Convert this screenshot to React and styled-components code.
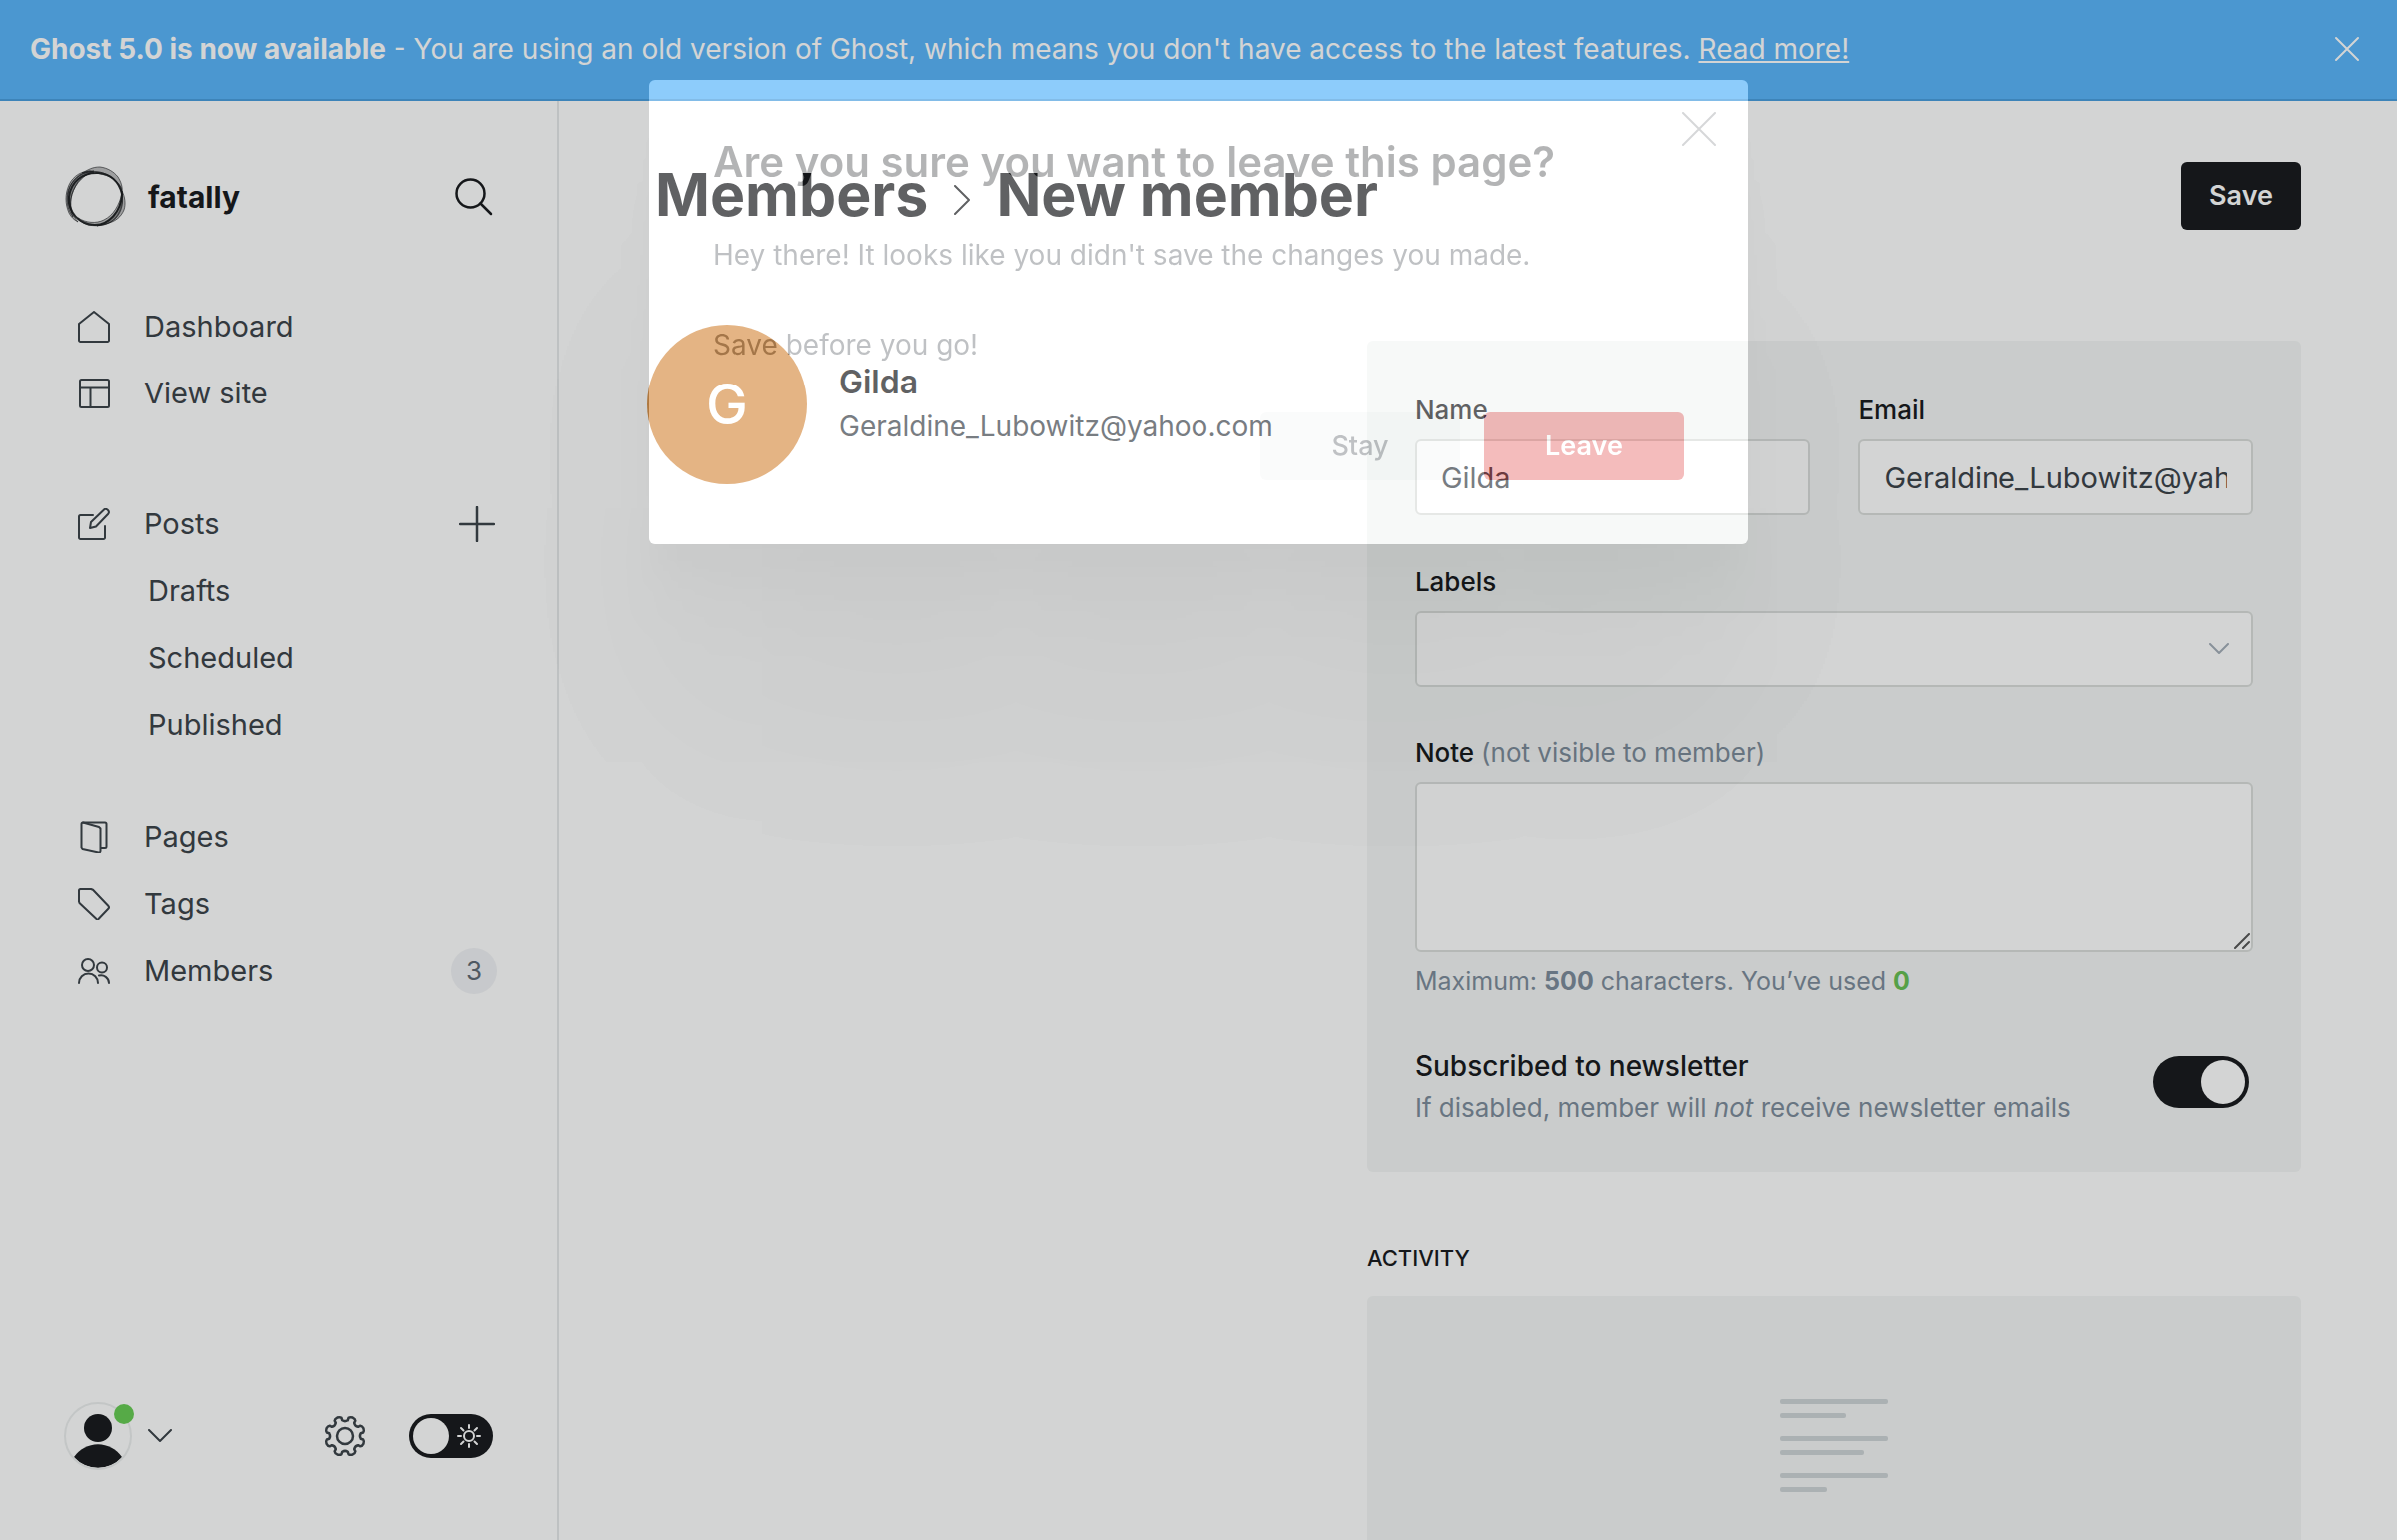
import React, { useState } from "react";
import styled, { createGlobalStyle, css } from "styled-components";

const Global = createGlobalStyle`
  *, *::before, *::after { box-sizing: border-box; }
  html, body { margin: 0; }
  body {
    font-family: Inter, "Liberation Sans", sans-serif;
    font-size: 28px;
    line-height: 44px;
    color: #15171a;
    background: #fff;
    -webkit-font-smoothing: antialiased;
  }
  button, input, textarea, select { font: inherit; color: inherit; }
  h1, h2, h3, p, ul { margin: 0; padding: 0; }
  a { color: inherit; text-decoration: none; }
`;

const Shell = styled.div`
  height: 100vh;
  display: flex;
  flex-direction: column;
  overflow: hidden;
`;

const Banner = styled.div`
  flex: none;
  display: flex;
  align-items: center;
  justify-content: space-between;
  height: 101px;
  padding: 0 36px 2px 30px;
  background: #58b4fa;
  border-bottom: 2px solid #479dde;
  color: #fff;

  a { text-decoration: underline; }
`;

const IconButton = styled.button`
  display: inline-flex;
  align-items: center;
  justify-content: center;
  padding: 0;
  border: 0;
  background: none;
  color: ${(p) => p.$color || "inherit"};
`;

const Body = styled.div`
  flex: 1;
  min-height: 0;
  display: grid;
  grid-template-columns: 560px minmax(0, 1fr);
`;

const Sidebar = styled.aside`
  display: flex;
  flex-direction: column;
  border-right: 2px solid #e6e8e9;
  padding: 62px 60px 70px 64px;
`;

const SiteHeader = styled.header`
  display: flex;
  align-items: center;
  height: 68px;
  margin-bottom: 62px;
  padding-right: 4px;
`;

const SiteName = styled.span`
  flex: 1;
  margin-left: 20px;
  font-size: 30px;
  font-weight: 700;
`;

const NavGroup = styled.ul`
  list-style: none;
  padding: 0 0 0 14px;
  margin-bottom: ${(p) => p.$gap}px;
`;

const NavItem = styled.li`
  display: flex;
  align-items: center;
  justify-content: space-between;
  height: 67px;
  padding-right: ${(p) => (p.$badge ? 0 : 2)}px;
  color: #394047;
  font-size: 29px;
`;

const NavLink = styled.a`
  display: flex;
  align-items: center;
  gap: 34px;
  padding-left: ${(p) => (p.$sub ? 70 : 0)}px;
`;

const Badge = styled.span`
  display: flex;
  align-items: center;
  justify-content: center;
  width: 46px;
  height: 46px;
  border-radius: 50%;
  background: #f1f2f5;
  font-size: 26px;
  color: #5d6873;
`;

const SidebarFooter = styled.footer`
  display: flex;
  align-items: center;
  margin-top: auto;
  padding-right: 4px;
`;

const UserButton = styled(IconButton)`
  gap: 16px;
  margin-right: auto;
  color: #394047;
`;

const AvatarFrame = styled.span`
  position: relative;
  width: 68px;
  height: 68px;
  border: 2px solid #eceeee;
  border-radius: 50%;

  svg { display: block; border-radius: 50%; }
`;

const StatusDot = styled.span`
  position: absolute;
  top: 0;
  right: -4px;
  width: 20px;
  height: 20px;
  border-radius: 50%;
  background: #66cc52;
`;

const SwitchTrack = styled.label`
  position: relative;
  flex: none;
  display: flex;
  align-items: center;
  width: ${(p) => p.$width}px;
  height: ${(p) => p.$height}px;
  padding: 0 4px;
  border-radius: 40px;
  background: #15171a;
  color: #fff;
  flex-direction: ${(p) => (p.$end ? "row-reverse" : "row")};

  input {
    position: absolute;
    inset: 0;
    width: 100%;
    height: 100%;
    margin: 0;
    opacity: 0;
  }
`;

const SwitchKnob = styled.span`
  width: ${(p) => p.$size}px;
  height: ${(p) => p.$size}px;
  border-radius: 50%;
  background: #fff;
`;

const NightSwitch = styled.span`
  display: flex;
  margin-left: 44px;

  svg { margin-left: 8px; }
`;

const Main = styled.main`
  overflow: hidden auto;
  scrollbar-width: none;
  padding: 61px 96px 0 88px;
`;

const PageHeader = styled.header`
  display: flex;
  align-items: center;
  justify-content: space-between;
  height: 68px;
  padding-left: 8px;
  margin-bottom: 111px;
`;

const PageTitle = styled.h2`
  display: flex;
  align-items: center;
  gap: 26px;
  font-size: 59px;
  line-height: 68px;
  font-weight: 700;
  padding-bottom: 2px;

  svg { margin-top: 10px; }
`;

const buttonBase = css`
  height: 68px;
  border: 0;
  border-radius: 6px;
  font-size: 27px;
  font-weight: 600;
`;

const SaveButton = styled.button`
  ${buttonBase}
  padding: 0 28px;
  background: #15171a;
  color: #fff;
`;

const Columns = styled.div`
  display: grid;
  grid-template-columns: minmax(0, 5fr) minmax(0, 7fr);
  column-gap: 53px;
  align-items: start;
`;

const Profile = styled.section`
  display: flex;
  align-items: center;
  gap: 32px;
  margin-top: -16px;
`;

const Initial = styled.span`
  flex: none;
  display: flex;
  align-items: center;
  justify-content: center;
  width: 160px;
  height: 160px;
  border-radius: 50%;
  background: #d7914a;
  color: #fff;
  font-size: 56px;
  font-weight: 500;
`;

const ProfileName = styled.h3`
  font-size: 32px;
  line-height: 44px;
  font-weight: 600;
`;

const ProfileEmail = styled.p`
  color: #394047;
`;

const Card = styled.section`
  background: #f4f6f5;
  border-radius: 6px;
  padding: 48px 48px 45px;
`;

const FieldRow = styled.div`
  display: grid;
  grid-template-columns: 1fr 1fr;
  gap: 48px;
`;

const Field = styled.div`
  display: flex;
  flex-direction: column;
  margin-bottom: ${(p) => p.$gap}px;
`;

const Label = styled.label`
  font-size: 26px;
  line-height: 44px;
  font-weight: 500;
  margin-bottom: 7px;

  span { font-weight: 400; color: #7c8b9a; }
`;

const control = css`
  width: 100%;
  border: 2px solid #dadddb;
  border-radius: 6px;
  background: #fff;
  color: #394047;
  font-size: 29px;
  outline: none;
`;

const TextInput = styled.input`
  ${control}
  height: 76px;
  padding: 0 24px;
`;

const SelectWrap = styled.div`
  display: grid;
  align-items: center;

  > * { grid-area: 1 / 1; }
  > svg { justify-self: end; margin-right: 24px; pointer-events: none; }
`;

const Select = styled.select`
  ${control}
  appearance: none;
  height: 76px;
  padding: 0 24px;
`;

const NoteArea = styled.textarea`
  ${control}
  display: block;
  height: 170px;
  padding: 16px 24px;
  resize: none;
`;

const NoteWrap = styled.div`
  display: grid;
  margin-bottom: 9px;

  > * { grid-area: 1 / 1; }
  > svg { place-self: end; margin: 3px; pointer-events: none; }
`;

const Hint = styled.p`
  font-size: ${(p) => (p.$small ? 25 : 26)}px;
  line-height: 40px;
  color: #7c8b9a;

  b { font-weight: 700; }
`;

const Used = styled.b`
  color: #66bf52;
`;

const ToggleRow = styled.div`
  display: flex;
  justify-content: space-between;
  padding-right: 4px;
`;

const ToggleCell = styled.div`
  display: flex;
  align-items: center;
  height: 76px;
`;

const ToggleTitle = styled.h3`
  font-size: 28px;
  line-height: 44px;
  font-weight: 500;
`;

const SectionTitle = styled.h3`
  font-size: 22px;
  line-height: 40px;
  font-weight: 500;
  margin: 66px 0 18px;
`;

const ActivityCard = styled(Card)`
  display: flex;
  flex-direction: column;
  align-items: center;
  padding: 103px 48px 140px;
`;

const Overlay = styled.div`
  position: fixed;
  inset: 0;
  display: flex;
  justify-content: center;
  align-items: flex-start;
  padding-top: 80px;
  overflow: hidden;
`;

const Scrim = styled.div`
  width: min(1100px, 90vw);
  border-radius: 6px;
  box-shadow: 0 0 0 200vmax rgba(19, 28, 24, 0.19);
`;

const Modal = styled.div`
  opacity: 0.32;
  border-radius: 6px;
  background: #fff;
  padding: 32px 64px 64px;
  box-shadow:
    0 6px 4px rgba(0, 0, 0, 0.01),
    0 25px 20px rgba(0, 0, 0, 0.02),
    0 45px 36px rgba(0, 0, 0, 0.03),
    0 84px 67px rgba(0, 0, 0, 0.04),
    0 200px 220px rgba(0, 0, 0, 0.1);
`;

const ModalHead = styled.div`
  display: flex;
  justify-content: space-between;
  align-items: flex-start;
  margin-right: -32px;
  margin-bottom: 45px;
`;

const ModalTitle = styled.h1`
  padding-top: 24px;
  font-size: 42px;
  line-height: 52px;
  font-weight: 600;
`;

const ModalText = styled.p`
  color: #394047;
  margin-bottom: 46px;
`;

const ModalActions = styled.div`
  display: flex;
  justify-content: flex-end;
  gap: 24px;
`;

const ModalButton = styled.button`
  ${buttonBase}
  width: 200px;
  background: ${(p) => (p.$danger ? "#de2f2f" : "#f0f2f3")};
  color: ${(p) => (p.$danger ? "#fff" : "#394047")};
  font-weight: ${(p) => (p.$danger ? 600 : 500)};
`;

const Icon = ({ size = 32, w = 2, box = "0 0 32 32", width, children }) => (
  <svg
    width={width || size}
    height={size}
    viewBox={box}
    fill="none"
    stroke="currentColor"
    strokeWidth={w}
    strokeLinecap="round"
    strokeLinejoin="round"
    aria-hidden="true"
  >
    {children}
  </svg>
);

const icons = {
  home: <path d="M1 13v16.5a1.5 1.5 0 0 0 1.500 1.500h27a1.500 1.500 0 0 0 1.500-1.500V13L16 1z" />,
  layout: (
    <>
      <rect x="2" y="2" width="29" height="28" rx="1.500" />
      <path d="M2 10.500h29M12.500 10.500V30" />
    </>
  ),
  edit: (
    <>
      <path d="M27 18v11.500a1.500 1.500 0 0 1-1.500 1.500h-23A1.500 1.500 0 0 1 1 29.500v-21A1.500 1.500 0 0 1 2.500 7H15" />
      <path d="M12 20l1-6L25.500 2a3 3 0 0 1 4.500 4L18 18.500z" />
    </>
  ),
  pages: (
    <>
      <path d="M5 1.500h22a1.500 1.500 0 0 1 1.500 1.500v22.500a1.500 1.500 0 0 1-1.500 1.500h-4" />
      <path d="M3.500 3v23.500l1 1.500 16 3.500a1.500 1.500 0 0 0 2-1.500V7.500L21 6 5 1.500A1.500 1.500 0 0 0 3.500 3z" />
    </>
  ),
  tag: <path d="M1 2.500A1.500 1.500 0 0 1 2.500 1H13l2 .8L30.500 18a2 2 0 0 1 0 2.500L20.500 31a1.500 1.500 0 0 1-2 0L1.500 15 1 13.500z" />,
  members: (
    <>
      <circle cx="10" cy="10" r="6" />
      <path d="M1 28a9.500 9.500 0 0 1 19 0" />
      <circle cx="24" cy="12.500" r="5" />
      <path d="M21 20.500A8 8 0 0 1 31 28" />
    </>
  ),
};

const gearPath = (() => {
  const pts = [];
  for (let i = 0; i < 8; i++) {
    const a = (i * Math.PI) / 4 + Math.PI / 8;
    const at = (r, d) => `${(20 + r * Math.cos(a + d)).toFixed(2)} ${(20 + r * Math.sin(a + d)).toFixed(2)}`;
    pts.push(`${i ? "L" : "M"}${at(16, -0.22)}L${at(18.5, -0.2)}Q${at(20, -0.14)} ${at(20, 0)}`);
    pts.push(`Q${at(20, 0.14)} ${at(18.5, 0.2)}L${at(16, 0.22)}Q${at(14, 0.39)} ${at(16, 0.56)}`);
  }
  return pts.join("") + "z";
})();

const Logo = () => (
  <svg width="64" height="64" viewBox="0 0 64 64" fill="none" stroke="#15171a" aria-hidden="true">
    <g fill="#15171a" fillOpacity="0.28" strokeWidth="1" strokeOpacity="0.6">
      <path d="M18 8C24 5 28 2 36 2c8 1 14 5 18 10 3 5 5 10 4 17-2-8-5-12-10-16C41 9 30 7 18 8z" />
      <path d="M30 6C18 5 9 11 5 20 1 29 1 39 5 48c2 4 5 7 9 9C8 50 6 43 7 34 9 22 17 11 30 6z" />
      <path d="M26 6C16 7 7 16 4 26c-2 9-1 18 5 26C5 42 6 31 11 22 15 14 20 9 30 8z" />
      <path d="M58 26c3 6 4 13 2 19-3 7-8 11-15 13-4 1-8 2-12 3 9-3 16-8 20-15 4-6 5-12 5-20z" />
      <path d="M58 29c1 8-1 16-5 22-4 5-9 8-15 9-9 1-18-2-24-7 8 5 18 6 26 2 10-5 15-15 18-26z" />
    </g>
    <path
      d="M58 29C55 16 46 9 35 8 18 7 7 17 5 32c-1 15 10 28 26 28 14 0 26-13 27-31z"
      strokeWidth="2"
      strokeOpacity="0.9"
    />
    <path d="M57 22C47 8 34 5 24 7 10 11 3 22 4 35c1 12 9 21 20 25 12 2 21 0 28-7 7-8 8-17 5-31z" strokeOpacity="0.7" />
  </svg>
);

const activityLines = [
  [0, 108], [14, 66], [37, 108], [51, 84], [74, 108], [88, 47],
];

function Switch({ label, width, height, knob, end, defaultChecked, children }) {
  const [on, setOn] = useState(defaultChecked);
  return (
    <SwitchTrack $width={width} $height={height} $end={end}>
      <input type="checkbox" aria-label={label} checked={on} onChange={(e) => setOn(e.target.checked)} />
      <SwitchKnob $size={knob} />
      {children}
    </SwitchTrack>
  );
}

function Nav({ icon, sub, badge, action, children }) {
  return (
    <NavItem $badge={badge}>
      <NavLink href="#" $sub={sub}>
        {icon && <Icon>{icons[icon]}</Icon>}
        {children}
      </NavLink>
      {action}
      {badge && <Badge>{badge}</Badge>}
    </NavItem>
  );
}

export default function App() {
  return (
    <>
      <Global />
      <Shell>
        <Banner>
          <span>
            <b>Ghost 5.0 is now available</b> - You are using an old version of Ghost, which means you don't have
            access to the latest features. <a href="#">Read more!</a>
          </span>
          <IconButton aria-label="Dismiss">
            <Icon size={28} box="0 0 28 28"><path d="M3 3l22 22M25 3L3 25" /></Icon>
          </IconButton>
        </Banner>
        <Body>
          <Sidebar>
            <SiteHeader>
              <Logo />
              <SiteName>fatally</SiteName>
              <IconButton aria-label="Search">
                <Icon size={38} w={2.5} box="0 0 38 38">
                  <circle cx="15.500" cy="15.500" r="14" />
                  <path d="M25.500 25.500L36 36" />
                </Icon>
              </IconButton>
            </SiteHeader>
            <nav>
              <NavGroup $gap={64}>
                <Nav icon="home">Dashboard</Nav>
                <Nav icon="layout">View site</Nav>
              </NavGroup>
              <NavGroup $gap={45}>
                <Nav
                  icon="edit"
                  action={
                    <IconButton aria-label="New post">
                      <Icon size={36} box="0 0 36 36" w={2.5}><path d="M18 1v34M1 18h34" /></Icon>
                    </IconButton>
                  }
                >
                  Posts
                </Nav>
                <Nav sub>Drafts</Nav>
                <Nav sub>Scheduled</Nav>
                <Nav sub>Published</Nav>
              </NavGroup>
              <NavGroup $gap={0}>
                <Nav icon="pages">Pages</Nav>
                <Nav icon="tag">Tags</Nav>
                <Nav icon="members" badge="3">Members</Nav>
              </NavGroup>
            </nav>
            <SidebarFooter>
              <UserButton aria-label="Account">
                <AvatarFrame>
                  <svg width="64" height="64" viewBox="0 0 64 64" fill="#15171a" aria-hidden="true">
                    <circle cx="32" cy="24" r="14" />
                    <path d="M8 53a29 29 0 0 1 48 0 32 32 0 0 1-48 0z" />
                  </svg>
                  <StatusDot />
                </AvatarFrame>
                <Icon width={24} size={14} box="0 0 24 14"><path d="M1 1l11 11L23 1" /></Icon>
              </UserButton>
              <IconButton aria-label="Settings" $color="#394047">
                <Icon size={42} box="-1 -1 42 42" w={2.5}>
                  <path d={gearPath} />
                  <circle cx="20" cy="20" r="8" />
                </Icon>
              </IconButton>
              <NightSwitch>
                <Switch label="Night shift" width={84} height={44} knob={36}>
                  <Icon size={24} box="0 0 24 24">
                    <circle cx="12" cy="12" r="5" />
                    <path d="M12 1v3M12 20v3M1 12h3M20 12h3M4 4l2.500 2.500M17.500 17.500L20 20M4 20l2.500-2.500M17.500 6.500L20 4" />
                  </Icon>
                </Switch>
              </NightSwitch>
            </SidebarFooter>
          </Sidebar>
          <Main>
            <PageHeader>
              <PageTitle>
                <a href="#">Members</a>
                <Icon width={16} size={30} box="0 0 16 30"><path d="M1 1l14 14L1 29" /></Icon>
                <span>New member</span>
              </PageTitle>
              <SaveButton>Save</SaveButton>
            </PageHeader>
            <Columns>
              <Profile>
                <Initial>G</Initial>
                <div>
                  <ProfileName>Gilda</ProfileName>
                  <ProfileEmail>Geraldine_Lubowitz@yahoo.com</ProfileEmail>
                </div>
              </Profile>
              <div>
                <Card>
                  <FieldRow>
                    <Field $gap={45}>
                      <Label htmlFor="name">Name</Label>
                      <TextInput id="name" defaultValue="Gilda" />
                    </Field>
                    <Field $gap={45}>
                      <Label htmlFor="email">Email</Label>
                      <TextInput id="email" defaultValue="Geraldine_Lubowitz@yahoo.com" />
                    </Field>
                  </FieldRow>
                  <Field $gap={44}>
                    <Label htmlFor="labels">Labels</Label>
                    <SelectWrap>
                      <Select id="labels" defaultValue=""><option value="" /></Select>
                      <Icon width={20} size={12} box="0 0 20 12"><path stroke="#a3adb8" d="M1 1l9 9 9-9" /></Icon>
                    </SelectWrap>
                  </Field>
                  <Field $gap={43}>
                    <Label htmlFor="note">Note <span>(not visible to member)</span></Label>
                    <NoteWrap>
                      <NoteArea id="note" />
                      <Icon size={16} box="0 0 16 16"><path stroke="#555" d="M1 15L15 1M9 15l6-6" /></Icon>
                    </NoteWrap>
                    <Hint $small>Maximum: <b>500</b> characters. You’ve used <Used>0</Used></Hint>
                  </Field>
                  <ToggleRow>
                    <div>
                      <ToggleTitle>Subscribed to newsletter</ToggleTitle>
                      <Hint>If disabled, member will <em>not</em> receive newsletter emails</Hint>
                    </div>
                    <ToggleCell>
                      <Switch label="Subscribed to newsletter" width={96} height={52} knob={44} end defaultChecked />
                    </ToggleCell>
                  </ToggleRow>
                </Card>
                <SectionTitle>ACTIVITY</SectionTitle>
                <ActivityCard>
                  <svg width="108" height="94" viewBox="0 0 108 94" fill="#ced4d7" aria-hidden="true">
                    {activityLines.map(([y, w]) => (
                      <rect key={y} y={y} width={w} height="5" rx="2" />
                    ))}
                  </svg>
                </ActivityCard>
              </div>
            </Columns>
          </Main>
        </Body>
      </Shell>
      <Overlay>
        <Scrim>
          <Modal role="dialog" aria-labelledby="leave-title">
            <ModalHead>
              <ModalTitle id="leave-title">Are you sure you want to leave this page?</ModalTitle>
              <IconButton aria-label="Close">
                <Icon size={34} box="0 0 34 34"><path stroke="#7f8488" d="M1 1l32 32M33 1L1 33" /></Icon>
              </IconButton>
            </ModalHead>
            <ModalText>Hey there! It looks like you didn't save the changes you made.</ModalText>
            <ModalText>Save before you go!</ModalText>
            <ModalActions>
              <ModalButton>Stay</ModalButton>
              <ModalButton $danger>Leave</ModalButton>
            </ModalActions>
          </Modal>
        </Scrim>
      </Overlay>
    </>
  );
}
